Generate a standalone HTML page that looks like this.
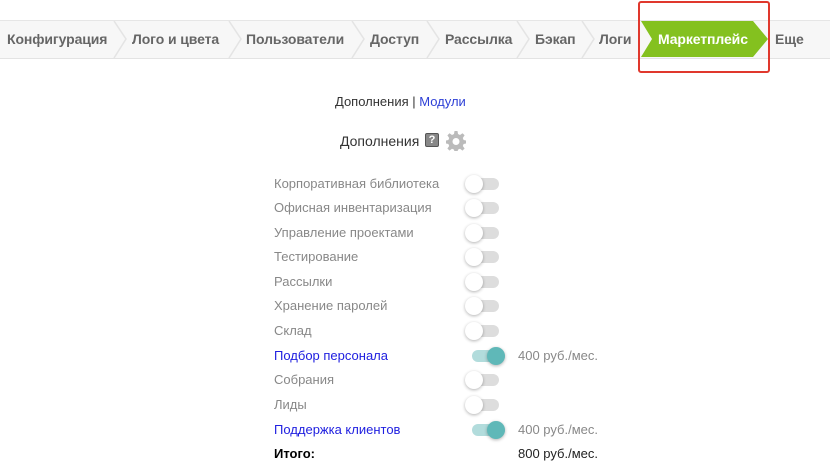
<!DOCTYPE html>
<html><head><meta charset="utf-8"><style>
body{margin:0;width:830px;height:475px;background:#fff;font-family:"Liberation Sans","DejaVu Sans",sans-serif;position:relative;overflow:hidden}
.nav{position:absolute;left:0;top:20px;width:830px;height:37px;background:#f7f7f7;border-top:1px solid #e6e6e6;border-bottom:1px solid #e3e3e3}
.t{position:absolute;top:31px;font-size:14px;font-weight:bold;color:#666;white-space:nowrap;letter-spacing:-0.1px}
.sep{position:absolute;top:21px}
.row{position:absolute;left:274px;font-size:13px;color:#888}
.tg{position:absolute;width:33px;height:12px;border-radius:6px;background:#ddd}
.tg i{position:absolute;width:18px;height:18px;border-radius:50%;top:-3px;left:-1px;background:#fff;box-shadow:0 1px 3px rgba(0,0,0,.3)}
.tg.on{background:#b2dcdc}
.tg.on i{left:15px;background:#5fb8b8}
.pr{position:absolute;left:518px;font-size:13px;color:#888}
</style></head><body>
<div class="nav"></div>
<svg class="sep" width="830" height="37" style="left:0">
<g fill="none" stroke="#e4e4e4" stroke-width="1.5">
<path d="M114 0 L126 18 L114 37"/><path d="M229 0 L241 18 L229 37"/><path d="M352 0 L364 18 L352 37"/><path d="M427 0 L439 18 L427 37"/><path d="M517 0 L529 18 L517 37"/><path d="M582 0 L594 18 L582 37"/>
</g>
<path d="M641 0 L753 0 L768 18 L753 36 L641 36 L652 18 Z" fill="#84c11f"/>
</svg>
<div class="t" style="left:7px">Конфигурация</div>
<div class="t" style="left:132px">Лого и цвета</div>
<div class="t" style="left:246px">Пользователи</div>
<div class="t" style="left:370px">Доступ</div>
<div class="t" style="left:445px">Рассылка</div>
<div class="t" style="left:535px">Бэкап</div>
<div class="t" style="left:599px">Логи</div>
<div class="t" style="left:658px;color:#fff">Маркетплейс</div>
<div class="t" style="left:775px">Еще</div>
<div style="position:absolute;left:638px;top:1px;width:128px;height:68px;border:2px solid #e0382d;border-radius:3px"></div>
<div style="position:absolute;left:335px;top:94px;font-size:13px;color:#333">Дополнения | <span style="color:#2d3fd6">Модули</span></div>
<div style="position:absolute;left:340px;top:133px;font-size:14px;color:#333">Дополнения</div>
<div style="position:absolute;left:425px;top:133px;width:12px;height:12px;border:1px solid #555;border-radius:2px;background:#888;color:#fff;font-size:11px;font-weight:bold;text-align:center;line-height:12px">?</div>
<svg style="position:absolute;left:446px;top:131px" width="20" height="20" viewBox="0 0 20 20"><path fill="#bbb" d="M8.5 0h3l.5 3 2 1 2.5-1.8 2.1 2.1L16.8 7l.8 2 2.4.5v3l-2.4.5-.8 2 1.8 2.5-2.1 2.1L14 17.8l-2 .8-.5 2.4h-3L8 18.6l-2-.8-2.5 1.8-2.1-2.1L3.2 15l-.8-2L0 12.5v-3L2.4 9l.8-2L1.4 4.4l2.1-2.1L6 4l2-1z"/><circle cx="10" cy="10.5" r="3.5" fill="#fff"/></svg>
<div class="row" style="top:176px">Корпоративная библиотека</div><div class="tg" style="left:466px;top:178px"><i></i></div>
<div class="row" style="top:200px">Офисная инвентаризация</div><div class="tg" style="left:466px;top:202px"><i></i></div>
<div class="row" style="top:225px">Управление проектами</div><div class="tg" style="left:466px;top:227px"><i></i></div>
<div class="row" style="top:249px">Тестирование</div><div class="tg" style="left:466px;top:251px"><i></i></div>
<div class="row" style="top:274px">Рассылки</div><div class="tg" style="left:466px;top:276px"><i></i></div>
<div class="row" style="top:298px">Хранение паролей</div><div class="tg" style="left:466px;top:300px"><i></i></div>
<div class="row" style="top:323px">Склад</div><div class="tg" style="left:466px;top:325px"><i></i></div>
<div class="row" style="top:348px;color:#2020e0">Подбор персонала</div><div class="tg on" style="left:472px;top:350px"><i></i></div><div class="pr" style="top:348px">400 руб./мес.</div>
<div class="row" style="top:372px">Собрания</div><div class="tg" style="left:466px;top:374px"><i></i></div>
<div class="row" style="top:397px">Лиды</div><div class="tg" style="left:466px;top:399px"><i></i></div>
<div class="row" style="top:422px;color:#2020e0">Поддержка клиентов</div><div class="tg on" style="left:472px;top:424px"><i></i></div><div class="pr" style="top:422px">400 руб./мес.</div>
<div class="row" style="top:446px;color:#000;font-weight:bold">Итого:</div><div class="pr" style="top:446px;color:#222">800 руб./мес.</div>
</body></html>
